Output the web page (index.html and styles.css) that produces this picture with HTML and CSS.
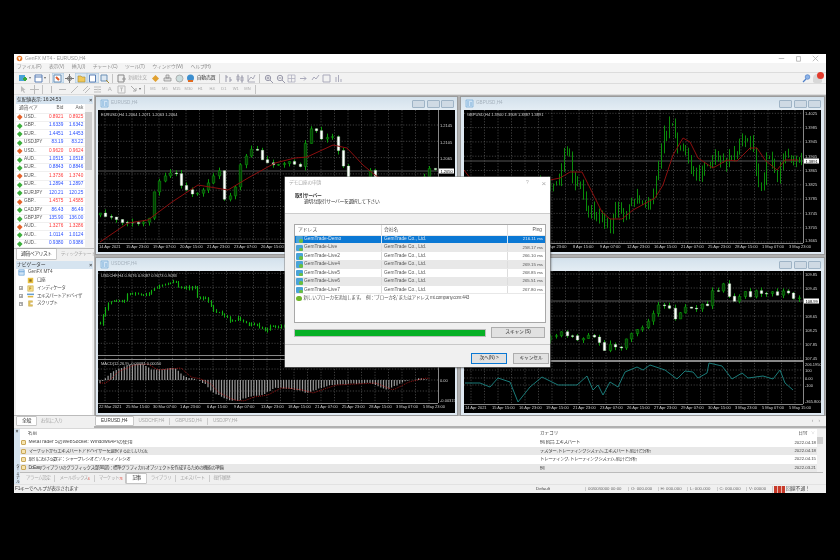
FILE: index.html
```html
<!DOCTYPE html>
<html lang="ja">
<head>
<meta charset="utf-8">
<title>GenFX MT4 - EURUSD,H4</title>
<link rel="stylesheet" href="styles.css">
</head>
<body>
<div class="app">
  <header class="titlebar">
    <svg class="ico" viewBox="0 0 9 9"><circle cx="4.5" cy="4.5" r="3.6" fill="#e8792a"/><path d="M2.5 3l2 4 2-4" fill="#fff"/></svg>
    <span class="title-text">GenFX MT4 - EURUSD,H4</span>
    <span class="winctl">
      <svg class="ico" viewBox="0 0 9 9"><path d="M1 4.5h7" stroke="#aaa"/></svg>
      <svg class="ico" viewBox="0 0 9 9"><path d="M2 2h5v6H2z" fill="none" stroke="#aaa"/></svg>
      <svg class="ico" viewBox="0 0 9 9"><path d="M1 1l7 7M8 1L1 8" stroke="#aaa"/></svg>
    </span>
  </header>
  <nav class="menubar">
    <span>ファイル(F)</span><span>表示(V)</span><span>挿入(I)</span><span>チャート(C)</span><span>ツール(T)</span><span>ウィンドウ(W)</span><span>ヘルプ(H)</span>
  </nav>
  <div class="toolbar">
    <span class="tool wide"><svg class="ico" viewBox="0 0 9 9"><path d="M0 1h6v6H0z" fill="#4aa3d8"/><path d="M4 5h4M6 3v4" stroke="#3aa83a" stroke-width="2"/></svg><i class="caret"></i></span>
    <span class="tool wide"><svg class="ico" viewBox="0 0 9 9"><path d="M1 1h7v7H1z" fill="#fff" stroke="#5b7fb5"/><path d="M1 3h7" stroke="#5b7fb5"/></svg><i class="caret"></i></span>
    <i class="sep"></i>
    <span class="tool on"><svg class="ico" viewBox="0 0 9 9"><path d="M1 1h7v7H1z" fill="#fff" stroke="#6b8fb5"/><path d="M3 3l3 3" stroke="#e05a2a" stroke-width="2"/></svg></span>
    <span class="tool"><svg class="ico" viewBox="0 0 9 9"><circle cx="4.5" cy="4.5" r="2" fill="none" stroke="#777"/><path d="M4.5 0v9M0 4.5h9" stroke="#777"/></svg></span>
    <span class="tool on"><svg class="ico" viewBox="0 0 9 9"><path d="M1 2h3l1 1h3v5H1z" fill="#f0c85a" stroke="#a88a30" stroke-width=".6"/></svg></span>
    <span class="tool on"><svg class="ico" viewBox="0 0 9 9"><path d="M1.500 1h6v7h-6z" fill="#fff" stroke="#5b7fb5"/></svg></span>
    <span class="tool"><svg class="ico" viewBox="0 0 9 9"><path d="M1 1h6v6H1z" fill="#dde8f2" stroke="#6b8fb5"/><path d="M6 6l3 3" stroke="#a88a30"/></svg></span>
    <i class="sep"></i>
    <span class="tool"><svg class="ico" viewBox="0 0 9 9"><path d="M1 1h6v7H1z" fill="#eee" stroke="#888"/><path d="M5 5h4M7 3v4" stroke="#999"/></svg></span>
    <span class="tool-label">新規注文</span>
    <span class="tool"><svg class="ico" viewBox="0 0 9 9"><path d="M4.500 1L8 4.500 4.500 8 1 4.500z" fill="#e0a030"/></svg></span>
    <span class="tool"><svg class="ico" viewBox="0 0 9 9"><path d="M3 1h3v3H3zM1 4h7v3H1z" fill="#ddd" stroke="#888" stroke-width=".7"/></svg></span>
    <span class="tool"><svg class="ico" viewBox="0 0 9 9"><circle cx="4.500" cy="4.500" r="3.500" fill="#cdd" stroke="#999" stroke-width=".7"/></svg></span>
    <span class="tool"><svg class="ico" viewBox="0 0 9 9"><circle cx="4.500" cy="4" r="3.500" fill="#3d8fcf"/><path d="M2 7h5" stroke="#e06a20" stroke-width="2"/></svg></span>
    <span class="tool-label dark">自動売買</span>
    <i class="sep"></i>
    <span class="tool"><svg class="ico" viewBox="0 0 9 9"><path d="M2 1v7M2 3h2M6 3v5M6 6h2" stroke="#99a"/></svg></span>
    <span class="tool"><svg class="ico" viewBox="0 0 9 9"><path d="M2 2h2v4H2zM6 3h2v4H6zM3 0v8M7 1v8" stroke="#99a" fill="none" stroke-width=".8"/></svg></span>
    <span class="tool"><svg class="ico" viewBox="0 0 9 9"><path d="M1 7l3-4 2 2 2-4M1 1v7h7" stroke="#99a" fill="none" stroke-width=".8"/></svg></span>
    <i class="sep"></i>
    <span class="tool"><svg class="ico" viewBox="0 0 9 9"><circle cx="4" cy="4" r="2.700" fill="none" stroke="#99a"/><path d="M6 6l3 3M2.500 4h3M4 2.500v3" stroke="#99a"/></svg></span>
    <span class="tool"><svg class="ico" viewBox="0 0 9 9"><circle cx="4" cy="4" r="2.700" fill="none" stroke="#99a"/><path d="M6 6l3 3M2.500 4h3" stroke="#99a"/></svg></span>
    <span class="tool"><svg class="ico" viewBox="0 0 9 9"><path d="M1 1h7v7H1zM1 4.500h7M4.500 1v7" stroke="#aab" fill="none" stroke-width=".7"/></svg></span>
    <span class="tool"><svg class="ico" viewBox="0 0 9 9"><path d="M1 4.500h6M5 2.500l2 2-2 2" stroke="#aab" fill="none"/></svg></span>
    <span class="tool"><svg class="ico" viewBox="0 0 9 9"><path d="M1 6l2-3 2 2 3-4" stroke="#aab" fill="none"/></svg></span>
    <span class="tool"><svg class="ico" viewBox="0 0 9 9"><path d="M1 1h7v7H1z" fill="none" stroke="#aab"/></svg></span>
    <span class="tool"><svg class="ico" viewBox="0 0 9 9"><path d="M2 8V3M4.500 8V1M7 8V5" stroke="#aab"/></svg></span>
    <span class="spring"></span>
    <svg class="ico" viewBox="0 0 9 9"><circle cx="5.500" cy="3" r="2.300" fill="#8cb3e8" stroke="#4f7fc8" stroke-width=".7"/><path d="M4 5L1 8" stroke="#4f7fc8" stroke-width="1.300"/></svg>
    <span class="bell"><b class="bell-badge"></b></span>
  </div>
  <div class="toolbar">
    <span class="tool"><svg class="ico" viewBox="0 0 9 9"><path d="M3 1v6l1.500-1.500L6 8l1-.5-1.500-2.500H7.500z" fill="#bbb"/></svg></span>
    <span class="tool"><svg class="ico" viewBox="0 0 9 9"><path d="M4.500 0v9M0 4.500h9" stroke="#bbb"/></svg></span>
    <i class="sep"></i>
    <span class="tool"><svg class="ico" viewBox="0 0 9 9"><path d="M4.500 1v7" stroke="#bbb"/></svg></span>
    <span class="tool"><svg class="ico" viewBox="0 0 9 9"><path d="M1 4.500h7" stroke="#bbb"/></svg></span>
    <span class="tool"><svg class="ico" viewBox="0 0 9 9"><path d="M1 8l7-7" stroke="#bbb"/></svg></span>
    <span class="tool"><svg class="ico" viewBox="0 0 9 9"><path d="M1 6l5-5M3 8l5-5" stroke="#bbb"/></svg></span>
    <span class="tool"><svg class="ico" viewBox="0 0 9 9"><path d="M1 2h7M1 4.500h7M1 7h7" stroke="#bbb"/><path d="M5 1v7" stroke="#ddd"/></svg></span>
    <span class="tool glyph">A</span>
    <span class="tool"><svg class="ico" viewBox="0 0 9 9"><path d="M1 1h7v7H1z" fill="none" stroke="#bbb"/><path d="M3 3h3M4.500 3v3.500" stroke="#bbb"/></svg></span>
    <span class="tool wide"><svg class="ico" viewBox="0 0 9 9"><path d="M2 1l5 5M7 3v3H4" stroke="#aaa" fill="none"/></svg><i class="caret"></i></span>
    <i class="sep"></i>
    <span class="period">M1</span><span class="period">M5</span><span class="period">M15</span><span class="period">M30</span><span class="period">H1</span><span class="period">H4</span><span class="period">D1</span><span class="period">W1</span><span class="period">MN</span>
    <i class="sep"></i>
  </div>

  <main class="workspace">
    <aside class="sidebar">
      <section class="market">
        <div class="panel-head"><span>気配値表示: 16:24:53</span><b class="close-x">×</b></div>
        <div class="market-body">
          <div class="market-table">
            <div class="mrow mhead"><span>通貨ペア</span><span>Bid</span><span>Ask</span></div>
            <div class="mrow down"><span><i class="arrow"></i>USD..</span><span>0.8921</span><span>0.8925</span></div>
            <div class="mrow up"><span><i class="arrow"></i>GBP..</span><span>1.6339</span><span>1.6342</span></div>
            <div class="mrow up"><span><i class="arrow"></i>EUR..</span><span>1.4451</span><span>1.4453</span></div>
            <div class="mrow up"><span><i class="arrow"></i>USDJPY</span><span>83.19</span><span>83.22</span></div>
            <div class="mrow down"><span><i class="arrow"></i>USD..</span><span>0.9620</span><span>0.9624</span></div>
            <div class="mrow up"><span><i class="arrow"></i>AUD..</span><span>1.0515</span><span>1.0518</span></div>
            <div class="mrow up"><span><i class="arrow"></i>EUR..</span><span>0.8843</span><span>0.8846</span></div>
            <div class="mrow down"><span><i class="arrow"></i>EUR..</span><span>1.3736</span><span>1.3740</span></div>
            <div class="mrow up"><span><i class="arrow"></i>EUR..</span><span>1.2894</span><span>1.2897</span></div>
            <div class="mrow up"><span><i class="arrow"></i>EURJPY</span><span>120.21</span><span>120.25</span></div>
            <div class="mrow down"><span><i class="arrow"></i>GBP..</span><span>1.4575</span><span>1.4585</span></div>
            <div class="mrow up"><span><i class="arrow"></i>CADJPY</span><span>86.43</span><span>86.49</span></div>
            <div class="mrow up"><span><i class="arrow"></i>GBPJPY</span><span>135.90</span><span>136.00</span></div>
            <div class="mrow down"><span><i class="arrow"></i>AUD..</span><span>1.3276</span><span>1.3286</span></div>
            <div class="mrow up"><span><i class="arrow"></i>AUD..</span><span>1.0114</span><span>1.0124</span></div>
            <div class="mrow up"><span><i class="arrow"></i>AUD..</span><span>0.9380</span><span>0.9386</span></div>
          </div>
          <div class="vscroll"><i class="thumb"></i></div>
        </div>
        <div class="tabs"><span class="tab active">通貨ペアリスト</span><span class="tab">ティックチャート</span></div>
      </section>
      <section class="navigator">
        <div class="panel-head"><span>ナビゲーター</span><b class="close-x">×</b></div>
        <ul class="tree">
          <li class="root"><svg class="ico" viewBox="0 0 9 9"><path d="M1 1h7v7H1z" fill="#cfe3f5" stroke="#5b9bd5" stroke-width=".8"/><path d="M1 3.500h7" stroke="#5b9bd5"/></svg>GenFX MT4</li>
          <li><i class="plus blank"></i><svg class="ico" viewBox="0 0 9 9"><path d="M1 1h7v7H1z" fill="#e8c040"/><path d="M3 3h3v3H3z" fill="#8a6d20"/></svg>口座</li>
          <li><i class="plus"></i><svg class="ico" viewBox="0 0 9 9"><path d="M1 1h7v7H1z" fill="#f6e08a" stroke="#c0a040" stroke-width=".7"/><path d="M3.500 2.500v4M3.500 2.500h2M3.500 4.500h2" stroke="#b08020" stroke-width=".8"/></svg>インディケータ</li>
          <li><i class="plus"></i><svg class="ico" viewBox="0 0 9 9"><path d="M0 2h9v2H0z" fill="#6aa0d0"/><path d="M1 5h7v2H1z" fill="#e0b840"/></svg>エキスパートアドバイザ</li>
          <li><i class="plus"></i><svg class="ico" viewBox="0 0 9 9"><path d="M2 1h5v2H4v3h3v2H2z" fill="#e8c860" stroke="#b09030" stroke-width=".5"/></svg>スクリプト</li>
        </ul>
        <div class="tabs"><span class="tab active">全般</span><span class="tab">お気に入り</span></div>
      </section>
    </aside>

    <div class="mdi">
      <div class="mdi-grid">
        <article class="win">
          <div class="win-title"><svg class="ico" viewBox="0 0 9 9"><path d="M1 1h7v7H1z" fill="#cfe3f5" stroke="#7fb0d8" stroke-width=".8"/><path d="M3 2v5M6 3v4" stroke="#7fb0d8"/></svg><span>EURUSD,H4</span><span class="win-btns"><i class="wbtn"></i><i class="wbtn"></i><i class="wbtn"></i></span></div>
          <svg class="chart" id="c-eurusd" width="357" height="142"></svg>
        </article>
        <article class="win">
          <div class="win-title"><svg class="ico" viewBox="0 0 9 9"><path d="M1 1h7v7H1z" fill="#cfe3f5" stroke="#7fb0d8" stroke-width=".8"/><path d="M3 2v5M6 3v4" stroke="#7fb0d8"/></svg><span>GBPUSD,H4</span><span class="win-btns"><i class="wbtn"></i><i class="wbtn"></i><i class="wbtn"></i></span></div>
          <svg class="chart" id="c-gbpusd" width="357" height="142"></svg>
        </article>
        <article class="win">
          <div class="win-title"><svg class="ico" viewBox="0 0 9 9"><path d="M1 1h7v7H1z" fill="#cfe3f5" stroke="#7fb0d8" stroke-width=".8"/><path d="M3 2v5M6 3v4" stroke="#7fb0d8"/></svg><span>USDCHF,H4</span><span class="win-btns"><i class="wbtn"></i><i class="wbtn"></i><i class="wbtn"></i></span></div>
          <svg class="chart" id="c-usdchf" width="357" height="142"></svg>
        </article>
        <article class="win">
          <div class="win-title"><span class="win-btns"><i class="wbtn"></i><i class="wbtn"></i><i class="wbtn"></i></span></div>
          <svg class="chart" id="c-usdjpy" width="357" height="142"></svg>
        </article>
      </div>
      <div class="chart-tabs">
        <span class="tab active">EURUSD,H4</span><span class="tab">USDCHF,H4</span><span class="tab">GBPUSD,H4</span><span class="tab">USDJPY,H4</span>
        <span class="spring"></span><span class="pager">‹ ›</span>
      </div>
    </div>
  </main>

  <section class="terminal">
    <div class="term-side"><b class="close-x">×</b><span class="term-label">ターミナル</span></div>
    <div class="term-main">
      <div class="term-grid">
        <div class="term-table">
          <div class="trow thead"><span>名前</span><span>カテゴリ</span><span class="date">日付 <i class="sortmark">▽</i></span></div>
          <div class="trow"><span class="latin"><i class="doc"></i>MetaTrader 5のWebSocket: WindowsAPIの使用</span><span>例, 統合, エキスパート</span><span class="date">2022.04.18</span></div>
          <div class="trow alt"><span><i class="doc"></i>マーケットからエキスパートアドバイザーを選択する正しい方法</span><span>テスター, トレーディングシステム, エキスパート, 統計と分析</span><span class="date">2022.04.18</span></div>
          <div class="trow"><span><i class="doc"></i>取引における数学：シャープレシオとソルティノレシオ</span><span>トレーディング, トレーディングシステム, 統計と分析</span><span class="date">2022.04.15</span></div>
          <div class="trow alt"><span><i class="doc"></i>DoEasyライブラリのグラフィックス(第90部)：標準グラフィカルオブジェクトを作成するための機能の準備</span><span>例</span><span class="date">2022.03.21</span></div>
        </div>
        <div class="vscroll term-scroll"><i class="thumb"></i></div>
      </div>
      <div class="term-tabs">
        <span class="tab">アラーム設定</span><span class="tab">メールボックス<sub>6</sub></span><span class="tab">マーケット<sub>73</sub></span><span class="tab active">記事</span><span class="tab">ライブラリ</span><span class="tab">エキスパート</span><span class="tab">操作履歴</span>
      </div>
    </div>
  </section>

  <footer class="status">
    <span class="st-help">F1キーでヘルプが表示されます</span>
    <span class="st-profile">Default</span>
    <span class="st-cell st-date">00/00/0000 00:00</span>
    <span class="st-cell">O: 000.000</span>
    <span class="st-cell">H: 000.000</span>
    <span class="st-cell">L: 000.000</span>
    <span class="st-cell">C: 000.000</span>
    <span class="st-cell st-vol">V: 00000</span>
    <span class="st-conn"><i class="conn-bars"></i>回線不通！</span>
  </footer>

  <div class="dialog">
    <div class="dlg-title"><span>デモ口座の申請</span><span class="dlg-ctl"><span>?</span><span class="dlg-x">×</span></span></div>
    <div class="dlg-head">
      <strong>取引サーバー</strong>
      <p>適切な取引サーバーを選択して下さい</p>
    </div>
    <div class="dlg-body">
      <div class="srv-list">
        <div class="srv srv-head"><span>アドレス</span><span>会社名</span><span class="ping">Ping</span></div>
        <div class="srv sel"><span><i class="srv-ico"></i>GemTrade-Demo</span><span>GemTrade Co., Ltd.</span><span class="ping">216.11 ms</span></div>
        <div class="srv alt"><span><i class="srv-ico"></i>GemTrade-Live</span><span>GemTrade Co., Ltd.</span><span class="ping">258.17 ms</span></div>
        <div class="srv"><span><i class="srv-ico"></i>GemTrade-Live2</span><span>GemTrade Co., Ltd.</span><span class="ping">266.10 ms</span></div>
        <div class="srv alt"><span><i class="srv-ico"></i>GemTrade-Live4</span><span>GemTrade Co., Ltd.</span><span class="ping">269.15 ms</span></div>
        <div class="srv"><span><i class="srv-ico"></i>GemTrade-Live5</span><span>GemTrade Co., Ltd.</span><span class="ping">268.85 ms</span></div>
        <div class="srv alt"><span><i class="srv-ico"></i>GemTrade-Live6</span><span>GemTrade Co., Ltd.</span><span class="ping">265.51 ms</span></div>
        <div class="srv"><span><i class="srv-ico"></i>GemTrade-Live7</span><span>GemTrade Co., Ltd.</span><span class="ping">267.80 ms</span></div>
        <div class="srv-add"><i class="add-ico"></i>新しいブローカを追加します。　例：'ブローカ名' またはアドレス mt.company.com:443</div>
      </div>
      <div class="scan-row">
        <div class="progress"></div>
        <button class="btn scan">スキャン (S)</button>
      </div>
    </div>
    <div class="dlg-foot">
      <button class="btn primary">次へ(N) &gt;</button>
      <button class="btn cancel">キャンセル</button>
    </div>
  </div>
</div>
<script src="chart.js"></script>
</body>
</html>
```
FILE: styles.css
```css
* { box-sizing: border-box; }
html, body { margin: 0; height: 100%; background: #000; }
body { overflow: hidden; }
i { font-style: normal; }

.app {
  position: relative;
  width: 812px;
  height: 439px;
  margin: 54px 0 0 14px;
  display: flex;
  flex-direction: column;
  background: #f0f0f0;
  color: #555;
  font: 4.900px/1 "Liberation Sans", "Noto Sans CJK JP", sans-serif;
  white-space: nowrap;
  filter: blur(.4px);
}
.ico { width: 9px; height: 9px; flex: none; display: block; }

.titlebar { height: 9px; flex: none; display: flex; align-items: center; padding-left: 2px; background: #fff; gap: 2px; }
.titlebar .ico { width: 7px; height: 7px; }
.title-text { color: #999; font-size: 5px; }
.winctl { margin-left: auto; display: flex; gap: 10px; padding-right: 7px; }

.menubar { height: 10px; flex: none; display: flex; align-items: center; gap: 7.500px; padding-left: 3px; background: #f4f4f4; color: #8f8f8f; border-bottom: 1px solid #dcdcdc; letter-spacing: -.2px; }

.toolbar { height: 11px; flex: none; display: flex; align-items: center; padding-left: 3px; background: #f2f2f2; border-bottom: 1px solid #dcdcdc; color: #aaa; }
.tool { flex: 0 0 11.700px; height: 10px; display: flex; align-items: center; justify-content: center; }
.tool.wide { flex-basis: 15px; gap: 1px; }
.tool.on { background: #d8e6f2; box-shadow: inset 0 0 0 .5px #a9c6de; }
.tool.glyph { color: #aaa; font-size: 6px; }
.tool-label { padding: 0 3px 0 1px; color: #aaa; letter-spacing: -.2px; }
.tool-label.dark { color: #333; padding: 0 2px 0 0; }
.caret { width: 0; height: 0; border: 1.500px solid transparent; border-top: 2px solid #666; border-bottom: 0; }
.sep { flex: none; width: 1px; height: 9px; margin: 0 2px; background: #c4c4c4; }
.period { flex: 0 0 11.800px; text-align: center; font-size: 4px; color: #aaa; }
.spring { flex: 1; }
.bell { position: relative; width: 9px; height: 9px; margin: 0 4px 0 2px; background: #d8d8d8; border-radius: 50% 50% 20% 20%; }
.bell-badge { position: absolute; right: -2px; top: -1.500px; width: 7px; height: 7px; border-radius: 50%; background: #e23a2c; }

.workspace { flex: 1; min-height: 0; display: flex; }

.sidebar { width: 80px; flex: none; display: flex; flex-direction: column; }
.market { height: 165px; display: flex; flex-direction: column; }
.panel-head { height: 8px; flex: none; margin: 1px 1px 0 2px; display: flex; align-items: center; justify-content: space-between; padding: 0 1px; background: #d6e4f0; color: #333; letter-spacing: -.15px; }
.close-x { font-weight: bold; font-size: 5px; color: #444; }
.market-body { flex: 1; min-height: 0; display: flex; margin: 0 2px; background: #fff; }
.market-table { flex: 1; min-width: 0; }
.mrow { height: 8.430px; display: grid; grid-template-columns: 29px 18.300px 20px; align-items: center; border-bottom: .5px solid #f0f0f0; font-size: 4.700px; }
.mrow > span:nth-child(n+2) { text-align: right; }
.mrow > span:first-child { display: flex; align-items: center; gap: 3px; padding-left: 1.500px; color: #555; }
.mhead { height: 9.500px; color: #666; }
.mhead > span:first-child { padding-left: 3px; }
.up > span:nth-child(n+2) { color: #2a50ff; }
.down > span:nth-child(n+2) { color: #ff3b3b; }
.arrow { width: 3.500px; height: 3.500px; flex: none; transform: rotate(45deg); }
.up .arrow { background: #3cae3c; }
.down .arrow { background: #e5622a; }
.vscroll { width: 7px; flex: none; background: #f0f0f0; padding-top: 8px; }
.thumb { display: block; height: 58px; background: #cdcdcd; }

.tabs { height: 12px; flex: none; display: flex; align-items: flex-end; padding: 0 2px 1px 3px; background: #f0f0f0; border-top: 1px solid #bbb; letter-spacing: -.5px; }
.tab { height: 10px; display: flex; align-items: center; padding: 0 4px; color: #aaa; }
.tab + .tab { border-left: .5px solid #ccc; }
.tab.active { background: #fff; color: #333; box-shadow: 0 0 0 .5px #999; }

.navigator { flex: 1; min-height: 0; display: flex; flex-direction: column; }
.navigator .tabs { height: 13px; align-items: flex-start; padding-top: 1px; }
.navigator .tab { height: 8px; }
.navigator .tab.active { padding: 0 5px; }
.tree { flex: 1; margin: 0 2px; padding: 0 0 0 3px; list-style: none; background: #fff; color: #555; font-size: 4.700px; letter-spacing: -.6px; }
.tree li { height: 7.700px; display: flex; align-items: center; gap: 3px; }
.tree .ico { width: 7px; height: 7px; }
.tree .root { margin-left: -1px; letter-spacing: -.1px; }
.plus { width: 4px; height: 4px; flex: none; border: .5px solid #aaa; background: linear-gradient(#888, #888) center / 3px .5px no-repeat, linear-gradient(#888, #888) center / .5px 3px no-repeat; margin-right: 1px; }
.plus.blank { border: 0; background: none; }

.mdi { flex: 1; min-width: 0; display: flex; flex-direction: column; padding: 1px 1px 0; background: #b0b0b0; }
.mdi-grid { flex: none; display: grid; grid-template-columns: 363px 365px; grid-template-rows: 159px 159px; gap: 2px; }
.win { display: flex; flex-direction: column; align-items: center; border: 1px solid #9a9a9a; background: #dfe9f2; }
.win-title { width: 100%; height: 13px; flex: none; display: flex; align-items: center; gap: 2px; padding: 0 3px 0 4px; background: linear-gradient(#d3e1ec, #e4edf4); color: #a6b2bd; font-size: 4.600px; }
.win-btns { margin-left: auto; display: flex; gap: 1.500px; }
.wbtn { display: block; width: 13px; height: 8px; border: .5px solid #9fb4c6; border-radius: 1px; background: #cfdae4; }
.chart { display: block; flex: none; background: #000; }

.chart-tabs { flex: none; height: 10px; margin: 0 -1px; display: flex; align-items: center; padding: 0 0 0 2px; background: #f0f0f0; font-size: 4.600px; }
.chart-tabs .tab { height: 7px; padding: 0 5px; }
.chart-tabs .tab.active { height: 8px; }
.pager { color: #999; padding-right: 4px; letter-spacing: 2px; }

.terminal { flex: none; height: 56px; display: flex; border-top: 1px solid #d8d8d8; }
.term-side { width: 6px; flex: none; display: flex; flex-direction: column; align-items: center; background: #d6e4f0; }
.term-label { margin-top: auto; writing-mode: vertical-rl; font-size: 4px; color: #444; padding-bottom: 1px; letter-spacing: -.2px; }
.term-main { flex: 1; min-width: 0; display: flex; flex-direction: column; }
.term-grid { height: 44px; flex: none; display: flex; background: #fff; margin-right: 3px; border-bottom: 1px solid #bbb; }
.term-table { flex: 1; min-width: 0; }
.trow { height: 8.400px; display: grid; grid-template-columns: 520px 243px 1fr; align-items: center; color: #444; font-size: 4.600px; letter-spacing: -.5px; }
.trow > span { overflow: hidden; }
.trow > span:first-child { display: flex; align-items: center; gap: 3px; padding-left: 1px; }
.trow > span.latin { font-size: 4.900px; letter-spacing: 0; }
.trow.alt { background: #e8e8e8; }
.thead { height: 9.500px; letter-spacing: 0; }
.thead > span:first-child { padding-left: 8px; }
.date { text-align: right; padding-right: 1px; font-size: 4.300px; letter-spacing: 0; }
.thead .date { font-size: 4.700px; padding-right: 2px; }
.sortmark { color: #aaa; font-size: 4px; padding-left: 2px; }
.doc { width: 4.500px; height: 5px; flex: none; background: #f6e3ae; border: .5px solid #c9a85a; border-radius: 1px; }
.term-scroll { width: 6px; padding-top: 8px; }
.term-scroll .thumb { height: 7px; }
.term-tabs { flex: 1; display: flex; align-items: center; padding-left: 2px; font-size: 4.600px; letter-spacing: -.5px; }
.term-tabs .tab { height: 7px; padding: 0 4px; }
.term-tabs .tab.active { height: 9px; padding: 0 5px; color: #222; }
.term-tabs sub { color: #e23a2c; font-size: 3px; line-height: 0; letter-spacing: 0; }

.status { flex: none; height: 9px; display: flex; align-items: center; background: #f0f0f0; border-top: 1px solid #e2e2e2; padding-left: 1px; font-size: 4.800px; color: #444; }
.st-help { width: 521px; flex: none; letter-spacing: -.3px; }
.st-profile { width: 49px; flex: none; font-size: 4.400px; }
.st-cell { width: 29.500px; flex: none; font-size: 4.300px; color: #666; border-left: .5px solid #ccc; padding-left: 2px; }
.st-date { width: 43px; }
.st-vol { width: 26px; }
.st-conn { display: flex; align-items: center; gap: 1px; border-left: .5px solid #ccc; padding-left: 1px; }
.conn-bars { width: 11px; height: 7px; background: repeating-linear-gradient(90deg, #c83a2a 0 3px, #e9b6ae 3px 4px); }

.dialog { position: absolute; left: 271px; top: 123px; width: 265px; height: 190px; display: flex; flex-direction: column; background: #f0f0f0; box-shadow: 0 0 0 .5px #888, 1px 1px 2px rgba(0,0,0,.5); color: #555; }
.dlg-title { height: 13px; flex: none; display: flex; align-items: center; justify-content: space-between; padding: 0 4px; background: #fff; color: #aaa; font-size: 4.800px; letter-spacing: -.2px; }
.dlg-ctl { display: flex; align-items: center; gap: 13px; color: #aaa; }
.dlg-x { font-size: 8px; }
.dlg-head { height: 24px; flex: none; padding: 4px 0 0 10px; background: #fff; border-bottom: 1px solid #ccc; color: #333; font-size: 4.800px; letter-spacing: -.4px; }
.dlg-head strong { display: block; font-weight: bold; }
.dlg-head p { margin: 1.500px 0 0 9px; letter-spacing: -.35px; }
.dlg-body { flex: 1; padding: 10px 4px 0 9px; }
.srv-list { height: 99px; background: #fff; border: 1px solid #a8a8a8; }
.srv { height: 8.430px; display: grid; grid-template-columns: 86px 126px 1fr; align-items: center; font-size: 4.800px; color: #555; border-bottom: .5px solid #e8e8e8; }
.srv > span { padding-top: .5px; }
.srv > span:first-child { display: flex; align-items: center; gap: 1.500px; padding-left: 1px; }
.srv > span + span { padding-left: 2px; border-left: .5px solid #ddd; height: 100%; display: flex; align-items: center; }
.srv .ping { justify-content: flex-end; padding-right: 2px; font-size: 4.400px; }
.srv-head { height: 10.500px; }
.srv-head > span:first-child { padding-left: 3px; }
.srv-head .ping { font-size: 4.800px; padding-right: 3px; }
.srv.alt { background: #e8e8e8; }
.srv.sel { background: #0a78d4; color: #d8e8f6; }
.srv.sel > span + span { border-left-color: #d8e8f6; }
.srv-ico { position: relative; width: 6.500px; height: 6.500px; flex: none; background: #4aa3d8; border-radius: 1px; }
.srv-ico::after { content: ""; position: absolute; right: 0; bottom: 0; width: 3.500px; height: 3.500px; border-radius: 50%; background: #6bbf3c; }
.srv-add { display: flex; align-items: center; gap: 2px; height: 8px; padding-left: 1px; font-size: 4.600px; letter-spacing: -.25px; }
.add-ico { width: 5.500px; height: 5.500px; flex: none; border-radius: 50%; background: #6fb52c; }
.scan-row { display: flex; align-items: center; gap: 5px; margin-top: 4px; }
.progress { width: 192px; height: 8px; flex: none; background: #06b025; border: .5px solid #bbb; }
.btn { padding: 0; font: inherit; font-size: 4.800px; letter-spacing: -.2px; color: #333; background: #e1e1e1; border: .5px solid #adadad; }
.scan { width: 54px; height: 11px; }
.dlg-foot { height: 23px; flex: none; display: flex; gap: 6px; padding: 8px 1px 0 186px; border-top: 1px solid #c8c8c8; }
.primary { width: 36px; height: 10.500px; border: 1px solid #0a78d4; }
.cancel { width: 36px; height: 10.500px; }

/* chart drawing */
.grid { stroke: #5a5a5a; stroke-width: .7; stroke-dasharray: 1.2 1.6; fill: none; }
.frame { stroke: #aaa; stroke-width: .8; fill: none; }
.last { stroke: #555; stroke-width: 1; fill: none; }
.wick { fill: none; stroke-width: 1; }
.wick.wide { stroke: #0a9a0a; }
.wick.narrow { stroke: #0a8a0a; }
.wick.bright { stroke: #0fae0f; }
.bull.wide { fill: #063d06; stroke: #0a9a0a; stroke-width: .6; }
.bear.wide { fill: #fff; stroke: #bfe8bf; stroke-width: .4; }
.bull.narrow, .bear.narrow { fill: #0a8a0a; }
.bull.bright, .bear.bright { fill: #12b012; }
.ma { stroke: #8b0f0f; stroke-width: 1; fill: none; }
.cci { stroke: #1a7a78; stroke-width: 1; fill: none; }
.hist { stroke: #9a9a9a; stroke-width: 1.200; fill: none; }
.signal { stroke: #c01818; stroke-width: .8; stroke-dasharray: 1 1; fill: none; }
.panel-bg { fill: #000; }
.last-box { fill: #fff; }
.last-text { fill: #000; font-size: 4px; }
.ohlc, .price, .time { fill: #cfcfcf; font-size: 4px; }
```
FILE: chart.js
```js
// Chart windows: generates candles and indicators from traced control points.
const SVGNS = 'http://www.w3.org/2000/svg';
let seed = 12345;
function rnd() {
  seed = (seed * 1664525 + 1013904223) % 4294967296;
  return seed / 4294967296;
}
function interp(pts, x) {
  if (x <= pts[0][0]) return pts[0][1];
  for (let i = 1; i < pts.length; i++) {
    if (x <= pts[i][0]) {
      const [x0, y0] = pts[i - 1], [x1, y1] = pts[i];
      return y0 + (y1 - y0) * (x - x0) / (x1 - x0);
    }
  }
  return pts[pts.length - 1][1];
}
function add(svg, tag, attrs, text) {
  const el = document.createElementNS(SVGNS, tag);
  for (const k in attrs) el.setAttribute(k, attrs[k]);
  if (text !== undefined) el.textContent = text;
  svg.appendChild(el);
  return el;
}
function polyline(svg, pts, cls) {
  add(svg, 'path', { class: cls, d: 'M' + pts.map(p => p[0] + ' ' + p[1]).join('L') });
}
function drawGrid(svg, c) {
  let d = '';
  for (let x = 7; x < c.axis; x += 13.5) d += `M${x} 0V${c.plot}`;
  const bottom = c.panel ? c.panel : c.plot;
  for (let y = c.gridY0; y < bottom; y += c.gridY) d += `M0 ${y}H${c.axis}`;
  add(svg, 'path', { class: 'grid', d });
}
function drawCandles(svg, c) {
  const s = c.candles;
  let wicks = '', bulls = '', bears = '';
  let prev = interp(s.pts, 0);
  for (let x = s.pts[0][0]; x < c.axis - 1; x += s.step) {
    const close = interp(s.pts, x) + (rnd() - .5) * s.noise;
    const top = Math.min(prev, close) - rnd() * s.wick;
    const bot = Math.max(prev, close) + rnd() * s.wick;
    const px = Math.round(x) + .5;
    wicks += `M${px} ${top.toFixed(1)}V${bot.toFixed(1)}`;
    const w = s.body, h = Math.max(Math.abs(prev - close), .6);
    const rect = `M${px - w / 2} ${Math.min(prev, close).toFixed(1)}h${w}v${h.toFixed(1)}h${-w}z`;
    if (close < prev) bulls += rect; else bears += rect;
    prev = close;
  }
  add(svg, 'path', { class: 'wick ' + s.tone, d: wicks });
  add(svg, 'path', { class: 'bull ' + s.tone, d: bulls });
  add(svg, 'path', { class: 'bear ' + s.tone, d: bears });
}
function drawFrame(svg, c) {
  let d = `M${c.axis + .5} 0V${c.plot}M0 ${c.plot + .5}H${c.axis}`;
  if (c.panel) d += `M0 ${c.panel + .5}H${c.axis}M0 ${c.panel + (c.gap || 4) + .5}H${c.axis}`;
  add(svg, 'path', { class: 'frame', d });
}
function drawLabels(svg, c) {
  if (c.ohlc) add(svg, 'text', { class: 'ohlc', x: 3, y: 6 }, c.ohlc);
  if (c.sub) add(svg, 'text', { class: 'ohlc', x: 3, y: c.panel + 10 }, c.sub);
  c.prices.forEach(([y, t]) => add(svg, 'text', { class: 'price', x: c.axis + 2, y: y + 1.5 }, t));
  if (c.last) {
    add(svg, 'rect', { class: 'last-box', x: c.axis + 1, y: c.last.y - 2.5, width: 15, height: 5 });
    add(svg, 'text', { class: 'last-text', x: c.axis + 2.5, y: c.last.y + 1.5 }, c.last.t);
  }
  // Entries left null fall behind the modal dialog and are never visible.
  c.times.forEach((t, i) => {
    if (t) add(svg, 'text', { class: 'time', x: 1 + i * 27, y: c.plot + 5 }, t);
  });
}

const charts = [
  {
    id: 'c-eurusd', axis: 340, plot: 133, gridY: 16.3, gridY0: 15,
    ohlc: 'EURUSD,H4  1.2064 1.2071 1.2063 1.2064',
    last: { y: 61, t: '1.2050' },
    prices: [[15, '1.2145'], [32, '1.2105'], [48, '1.2065']],
    times: ['14 Apr 2021', '15 Apr 23:00', '19 Apr 07:00', '20 Apr 15:00', '21 Apr 23:00', '23 Apr 07:00', '26 Apr 15:00'],
    candles: {
      step: 5.4, body: 2.4, noise: 4, wick: 4, tone: 'wide',
      pts: [[2, 105], [17, 108], [30, 113], [50, 113], [55, 85], [60, 73], [77, 60], [80, 75], [97, 85], [104, 80], [122, 60], [125, 92], [137, 78], [140, 57], [150, 42], [157, 35], [162, 48], [177, 57], [189, 50], [202, 55], [209, 25], [215, 18], [224, 28], [235, 28], [240, 42], [245, 55], [250, 80], [265, 75], [272, 62], [280, 72], [300, 90], [320, 75], [330, 60], [338, 60]]
    },
    ma: [[2, 132], [30, 113], [50, 110], [74, 92], [100, 75], [130, 80], [150, 68], [177, 53], [197, 48], [209, 47], [235, 35], [249, 38], [265, 55], [277, 65], [300, 78], [338, 70]]
  },
  {
    id: 'c-gbpusd', axis: 339, plot: 133, gridY: 14.3, gridY0: 3.3,
    ohlc: 'GBPUSD,H4  1.3900 1.3908 1.3887 1.3891',
    last: { y: 51, t: '1.3891' },
    prices: [[3.3, '1.4025'], [17.3, '1.3985'], [31.7, '1.3945'], [46, '1.3905'], [60.3, '1.3865'], [74.3, '1.3825'], [88.7, '1.3785'], [103, '1.3745'], [117.3, '1.3705'], [130.7, '1.3665']],
    times: [null, null, null, '6 Apr 23:00', '8 Apr 15:00', '9 Apr 07:00', '12 Apr 23:00', '16 Apr 15:00', '21 Apr 07:00', '25 Apr 23:00', '28 Apr 15:00', '1 May 07:00', '3 May 23:00'],
    candles: {
      step: 2.7, body: .9, noise: 8, wick: 8, tone: 'narrow',
      pts: [[0, 90], [40, 85], [76, 75], [93, 75], [99, 48], [106, 45], [109, 75], [118, 72], [121, 98], [139, 108], [146, 125], [149, 102], [163, 102], [169, 85], [186, 92], [191, 75], [199, 28], [208, 13], [213, 35], [219, 38], [233, 68], [239, 58], [249, 45], [259, 52], [273, 42], [278, 25], [288, 32], [293, 75], [298, 78], [303, 42], [313, 65], [319, 45], [333, 47], [335, 50]]
    },
    ma: [[0, 60], [6, 68], [40, 85], [76, 72], [96, 68], [106, 62], [118, 62], [138, 102], [146, 109], [158, 109], [169, 100], [191, 88], [199, 75], [209, 45], [219, 28], [226, 32], [234, 48], [249, 58], [263, 50], [273, 51], [286, 38], [293, 38], [301, 50], [313, 60], [321, 50], [334, 50]]
  },
  {
    id: 'c-usdchf', axis: 340, plot: 132, panel: 84, gridY: 14, gridY0: 2.3, panelGrid: [98, 109, 120],
    ohlc: 'USDCHF,H4  0.9076 0.9087 0.9073 0.9083',
    sub: 'MACD(12,26,9) -0.00081 0.00050',
    prices: [[109, '0.00'], [129, '-0.00315']],
    times: ['22 Mar 2021', '25 Mar 15:00', '30 Mar 07:00', '1 Apr 23:00', '6 Apr 15:00', '9 Apr 07:00', '13 Apr 23:00', '18 Apr 15:00', '21 Apr 07:00', '25 Apr 23:00', '28 Apr 15:00', '3 May 07:00', '5 May 23:00'],
    candles: {
      step: 2.7, body: 1.2, noise: 2.5, wick: 2, tone: 'bright',
      pts: [[2, 52], [5, 44], [9, 32], [27, 29], [30, 21], [47, 24], [57, 17], [77, 9], [80, 17], [97, 17], [100, 29], [107, 26], [114, 39], [127, 44], [132, 52], [140, 47], [150, 54], [157, 52], [169, 62], [170, 56], [184, 56], [338, 60]]
    },
    hist: { zero: 109, pts: [[2, 112], [7, 108], [14, 101], [30, 94], [44, 93], [54, 99], [77, 97], [87, 106], [97, 108], [107, 113], [114, 121], [130, 129], [140, 130], [150, 126], [164, 124], [177, 117], [182, 117], [199, 119], [209, 122], [232, 114], [272, 112], [289, 119], [305, 111], [322, 107], [332, 109]] }
  },
  {
    id: 'c-usdjpy', axis: 339, plot: 133, panel: 89, gap: 1, gridY: 14, gridY0: 3, panelGrid: [99, 107, 114],
    last: { y: 30, t: '108.99' },
    prices: [[3, '109.85'], [17, '109.45'], [45, '108.65'], [59, '108.25'], [73, '107.85'], [87, '107.45'], [93, '206.1950'], [99, '100'], [107, '0.00'], [114, '-100'], [130, '-365.800']],
    times: ['14 Apr 2021', '15 Apr 15:00', '16 Apr 23:00', '19 Apr 15:00', '21 Apr 23:00', '23 Apr 07:00', '26 Apr 15:00', '27 Apr 23:00', '29 Apr 07:00', '30 Apr 15:00', '3 May 23:00', '5 May 07:00', '5 May 15:00'],
    candles: {
      step: 5.4, body: 2.4, noise: 4, wick: 4, tone: 'wide',
      pts: [[0, 69], [91, 67], [98, 61], [116, 69], [126, 61], [141, 81], [146, 71], [159, 79], [163, 64], [176, 59], [186, 46], [193, 36], [203, 34], [213, 51], [218, 34], [233, 36], [243, 34], [244, 22], [253, 21], [258, 11], [263, 21], [268, 29], [274, 29], [279, 19], [286, 27], [289, 21], [309, 22], [313, 26], [319, 19], [329, 27]]
    },
    line: [[1, 112], [16, 112], [26, 116], [34, 107], [46, 111], [54, 131], [66, 116], [78, 106], [94, 114], [113, 114], [123, 105], [129, 119], [134, 114], [139, 124], [146, 111], [154, 116], [161, 101], [173, 96], [179, 99], [186, 94], [201, 99], [213, 108], [221, 100], [229, 101], [234, 107], [243, 102], [245, 92], [258, 95], [268, 108], [278, 102], [284, 107], [299, 105], [309, 108], [316, 99], [321, 112], [329, 119]]
  }
];

charts.forEach(c => {
  const svg = document.getElementById(c.id);
  drawGrid(svg, c);
  if (c.last) add(svg, 'path', { class: 'last', d: `M0 ${c.last.y}H${c.axis}` });
  drawCandles(svg, c);
  if (c.ma) polyline(svg, c.ma, 'ma');
  if (c.panel) {
    add(svg, 'rect', { class: 'panel-bg', x: 0, y: c.panel, width: c.axis, height: c.plot - c.panel });
    let d = (c.panelGrid || []).map(y => `M0 ${y}H${c.axis}`).join('');
    for (let x = 7; x < c.axis; x += 13.5) d += `M${x} ${c.panel}V${c.plot}`;
    add(svg, 'path', { class: 'grid', d });
  }
  if (c.hist) {
    const h = c.hist;
    let bars = '';
    const sig = [];
    for (let x = 2; x < 333; x += 2.7) {
      const y = interp(h.pts, x) + (rnd() - .5) * .8;
      bars += `M${x.toFixed(1)} ${h.zero}V${y.toFixed(1)}`;
      sig.push([+x.toFixed(1), +interp(h.pts, x - 6).toFixed(1)]);
    }
    add(svg, 'path', { class: 'hist', d: bars });
    polyline(svg, sig, 'signal');
  }
  if (c.line) polyline(svg, c.line, 'cci');
  drawFrame(svg, c);
  drawLabels(svg, c);
});
```
